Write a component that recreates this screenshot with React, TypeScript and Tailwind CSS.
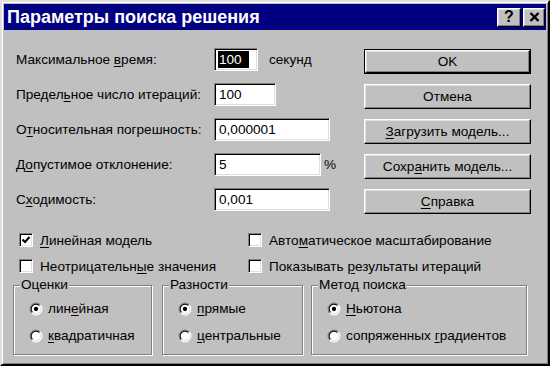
import React from "react";

const raised =
  "border-t border-l border-r border-b border-t-white border-l-white border-r-black border-b-black shadow-[inset_-1px_-1px_0_#808080,inset_1px_1px_0_#dfdfdf] bg-[#c0c0c0]";
const sunken =
  "border-t border-l border-r border-b border-t-[#808080] border-l-[#808080] border-r-white border-b-white shadow-[inset_1px_1px_0_#000,inset_-1px_-1px_0_#dfdfdf]";

function U({ children }: { children: React.ReactNode }) {
  return <span className="underline underline-offset-[2px] decoration-1">{children}</span>;
}

function Field({
  label,
  width,
  value,
  selected,
  suffix,
  suffixGap,
}: {
  label: React.ReactNode;
  width: string;
  value: string;
  selected?: boolean;
  suffix?: string;
  suffixGap?: string;
}) {
  return (
    <div className="flex items-center h-[23px]">
      <div className="w-[198px] text-[13.6px] leading-[15px] whitespace-nowrap">{label}</div>
      <div className={`${sunken} ${width} h-[23px] bg-white flex items-center pl-[3px] pr-[4px]`}>
        {selected ? (
          <span className="bg-black text-white text-[13.6px] leading-[17px] pr-[7px] pl-[1px]">{value}</span>
        ) : (
          <span className="text-[13.6px] leading-[17px] pl-[1px]">{value}</span>
        )}
      </div>
      {suffix && <span className={`${suffixGap} text-[13.6px] leading-[15px]`}>{suffix}</span>}
    </div>
  );
}

function Button({ children, def }: { children: React.ReactNode; def?: boolean }) {
  if (def) {
    return (
      <div className="h-[25px] border border-black flex">
        <div className={`${raised} flex-1 flex items-center justify-center text-[13.6px] leading-[15px]`}>{children}</div>
      </div>
    );
  }
  return (
    <div className={`${raised} h-[25px] flex items-center justify-center text-[13.6px] leading-[15px]`}>{children}</div>
  );
}

function Check({ checked, children }: { checked?: boolean; children: React.ReactNode }) {
  return (
    <div className="flex items-center h-[14px]">
      <div className={`${sunken} w-[14px] h-[14px] bg-white flex items-center justify-center`}>
        {checked && (
          <svg width="10" height="10" viewBox="0 0 10 10">
            <path d="M1.5 4.5 L4 7 L8.5 2" stroke="#000" strokeWidth="2" fill="none" />
          </svg>
        )}
      </div>
      <span className="ml-[7px] text-[13.6px] leading-[15px] whitespace-nowrap">{children}</span>
    </div>
  );
}

function Radio({ checked, children }: { checked?: boolean; children: React.ReactNode }) {
  return (
    <div className="flex items-center h-[13px]">
      <svg width="14" height="14" viewBox="0 0 13 13">
        <circle cx="6.5" cy="6.5" r="5.5" fill="#fff" />
        <path d="M2.6 10.4 A5.5 5.5 0 0 1 10.4 2.6" stroke="#808080" strokeWidth="1" fill="none" />
        <path d="M10.4 2.6 A5.5 5.5 0 0 1 2.6 10.4" stroke="#fff" strokeWidth="1" fill="none" />
        <path d="M3.3 9.7 A4.5 4.5 0 0 1 9.7 3.3" stroke="#000" strokeWidth="1" fill="none" />
        <path d="M9.7 3.3 A4.5 4.5 0 0 1 3.3 9.7" stroke="#dfdfdf" strokeWidth="1" fill="none" />
        {checked && <circle cx="6.5" cy="6.5" r="2" fill="#000" />}
      </svg>
      <span className="ml-[5px] text-[13.6px] leading-[15px] whitespace-nowrap">{children}</span>
    </div>
  );
}

function Group({ title, width, children }: { title: string; width: string; children: React.ReactNode }) {
  return (
    <div
      className={`relative ${width} h-[70px] border border-[#808080] shadow-[1px_1px_0_#fff,inset_1px_1px_0_#fff] flex flex-col pl-[15px] pt-[16px] gap-[14px]`}
    >
      <span className="absolute top-[-9px] left-[6px] px-[1px] bg-[#c0c0c0] text-[13.6px] leading-[15px]">{title}</span>
      {children}
    </div>
  );
}

export default function App() {
  return (
    <div className="w-[550px] h-[366px] bg-[#c0c0c0] font-['Liberation_Sans',Arial,sans-serif] text-black overflow-hidden">
      <div className="w-[550px] h-[366px] border-t-2 border-l-2 border-t-[#dfdfdf] border-l-[#dfdfdf] border-r-2 border-b-2 border-r-black border-b-black shadow-[inset_1px_1px_0_#fff,inset_-1px_-1px_0_#808080] p-[2px] flex flex-col">
        <div className="h-[26px] bg-[#000080] flex items-center justify-between pl-[3px] pr-[1px]">
          <span className="text-white font-bold text-[18px] leading-[20px]">Параметры поиска решения</span>
          <div className="flex gap-[2px]">
            <div className={`${raised} w-[24px] h-[19px] flex items-center justify-center font-bold text-[16px] leading-[16px]`}>?</div>
            <div className={`${raised} w-[22px] h-[19px] flex items-center justify-center`}>
              <svg width="11" height="10" viewBox="0 0 11 10">
                <path d="M1.5 1 L9.5 9 M9.5 1 L1.5 9" stroke="#000" strokeWidth="2.4" fill="none" />
              </svg>
            </div>
          </div>
        </div>

        <div className="flex flex-col pt-[18px]">
          <div className="flex ml-[12px]">
            <div className="flex flex-col gap-[12px] w-[348px]">
              <Field
                label={<>Максимальное <U>в</U>ремя:</>}
                width="w-[44px]"
                value="100"
                selected
                suffix="секунд"
                suffixGap="ml-[11px]"
              />
              <Field label={<>Предел<U>ь</U>ное число итераций:</>} width="w-[62px]" value="100" />
              <Field label={<>О<U>т</U>носительная погрешность:</>} width="w-[116px]" value="0,000001" />
              <Field
                label={<>Д<U>о</U>пустимое отклонение:</>}
                width="w-[107px]"
                value="5"
                suffix="%"
                suffixGap="ml-[3px]"
              />
              <Field label={<>С<U>х</U>одимость:</>} width="w-[116px]" value="0,001" />
            </div>
            <div className="flex flex-col gap-[10px] w-[167px] mt-[1px]">
              <Button def>OK</Button>
              <Button>Отмена</Button>
              <Button>
                <U>З</U>агрузить модель...
              </Button>
              <Button>
                Сохр<U>а</U>нить модель...
              </Button>
              <Button>
                <U>С</U>правка
              </Button>
            </div>
          </div>

          <div className="grid grid-cols-[229px_1fr] gap-y-[12px] ml-[15px] mt-[19px]">
            <Check checked>
              <U>Л</U>инейная модель
            </Check>
            <Check>
              Авто<U>м</U>атическое масштабирование
            </Check>
            <Check>
              Неотрицательн<U>ы</U>е значения
            </Check>
            <Check>
              Показывать <U>р</U>езультаты итераций
            </Check>
          </div>

          <div className="flex ml-[9px] mt-[12px]">
            <Group title="Оценки" width="w-[139px]">
              <Radio checked>
                лин<U>е</U>йная
              </Radio>
              <Radio>
                <U>к</U>вадратичная
              </Radio>
            </Group>
            <div className="w-[10px]" />
            <Group title="Разности" width="w-[141px]">
              <Radio checked>
                <U>п</U>рямые
              </Radio>
              <Radio>
                <U>ц</U>ентральные
              </Radio>
            </Group>
            <div className="w-[8px]" />
            <Group title="Метод поиска" width="w-[216px]">
              <Radio checked>
                <U>Н</U>ьютона
              </Radio>
              <Radio>
                сопряженных <U>г</U>радиентов
              </Radio>
            </Group>
          </div>
        </div>
      </div>
    </div>
  );
}
